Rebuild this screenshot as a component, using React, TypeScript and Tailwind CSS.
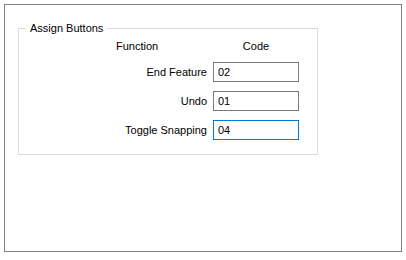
import React from "react";

const rows = [
  { label: "End Feature", code: "02", focused: false },
  { label: "Undo", code: "01", focused: false },
  { label: "Toggle Snapping", code: "04", focused: true },
];

export default function App() {
  return (
    <div
      className="w-[406px] h-[260px] bg-white pt-[4px] pl-[4px] text-[11px] text-black"
      style={{ fontFamily: '"Liberation Sans", Arial, sans-serif' }}
    >
      <div className="w-[398px] h-[248px] border border-[#828282] pl-[13px] pt-[15px]">
        <fieldset className="w-[300px] h-[135px] border border-[#dcdcdc] m-0 p-0 pt-[2px]">
          <legend className="ml-[7px] px-[4px] leading-[16px]">Assign Buttons</legend>
          <div className="grid grid-cols-[188px_86px] gap-x-[6px] gap-y-[9px] items-center">
            <div className="h-[16px] leading-[16px] pl-[97px] -mb-[1px]">Function</div>
            <div className="h-[16px] leading-[16px] text-center -mb-[1px]">Code</div>
            {rows.map((r) => (
              <React.Fragment key={r.label}>
                <div className="text-right leading-[16px]">{r.label}</div>
                <div
                  className={
                    r.focused
                      ? "h-[20px] border border-[#0078d7] pl-[4px] leading-[18px]"
                      : "h-[20px] border border-[#7a7a7a] pl-[4px] leading-[18px]"
                  }
                >
                  {r.code}
                </div>
              </React.Fragment>
            ))}
          </div>
        </fieldset>
      </div>
    </div>
  );
}
